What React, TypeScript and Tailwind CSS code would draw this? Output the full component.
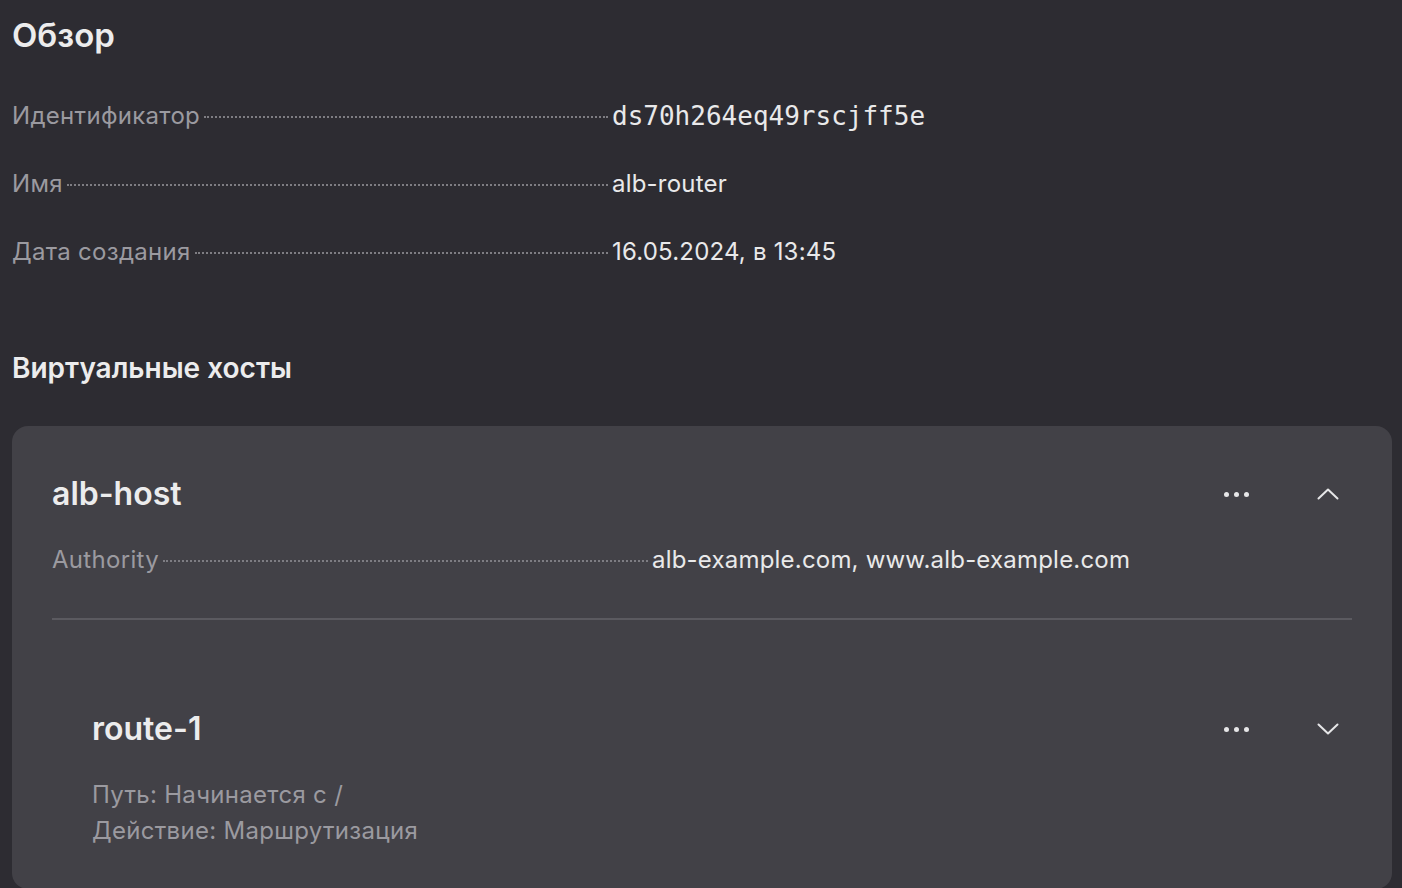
import React from 'react';

const font = { fontFamily: 'Inter, "Noto Sans", sans-serif' };

const labelClass = "text-[24px] leading-8 tracking-[0.3px] text-[#9b9aa0] whitespace-nowrap";
const valueClass = "text-[24px] leading-8 tracking-[0.2px] text-[#e9e9ea] whitespace-nowrap";

const Leader: React.FC<{ label: string }> = ({ label }) => (
  <div className="flex items-baseline w-[596px] shrink-0">
    <span className={labelClass}>{label}</span>
    <span className="flex-1 ml-1 border-b-2 border-dotted border-[#7e7d83] translate-y-[-6px]" />
  </div>
);

const Dots = () => (
  <button className="w-12 h-10 flex items-center justify-center gap-[5px]">
    <span className="w-[5px] h-[5px] rounded-full bg-[#e6e6e8]" />
    <span className="w-[5px] h-[5px] rounded-full bg-[#e6e6e8]" />
    <span className="w-[5px] h-[5px] rounded-full bg-[#e6e6e8]" />
  </button>
);

const Chevron: React.FC<{ up?: boolean }> = ({ up }) => (
  <button className="w-12 h-10 flex items-center justify-center">
    <svg width="24" height="24" viewBox="0 0 24 24" fill="none" stroke="#e6e6e8" strokeWidth="2" strokeLinecap="round" strokeLinejoin="round">
      {up ? <path d="M2.5 16.5 12 7.5l9.5 9" /> : <path d="M2.5 7.5 12 16.5l9.5-9" />}
    </svg>
  </button>
);

const rows = [
  { label: 'Идентификатор', value: 'ds70h264eq49rscjff5e', mono: true },
  { label: 'Имя', value: 'alb-router' },
  { label: 'Дата создания', value: '16.05.2024, в 13:45' },
];

export default function App() {
  return (
    <div className="min-h-screen bg-[#2d2c32] px-3 pt-[15px] pb-10" style={font}>
      <h1 className="text-[33px] leading-10 font-semibold text-[#ececed]">Обзор</h1>

      <div className="mt-[27px]">
        {rows.map((r) => (
          <div key={r.label} className="h-[68px] flex items-center">
            <Leader label={r.label} />
            <span
              className={r.mono ? "ml-1 text-[26px] leading-8 text-[#e9e9ea] whitespace-nowrap" : `ml-1 ${valueClass}`}
              style={r.mono ? { fontFamily: '"DejaVu Sans Mono", "Liberation Mono", monospace' } : undefined}
            >
              {r.value}
            </span>
          </div>
        ))}
      </div>

      <h2 className="mt-16 text-[28px] leading-9 font-semibold text-[#ececed]">Виртуальные хосты</h2>

      <div className="mt-10 w-[1380px] rounded-2xl bg-[#424147] px-10 pt-12 pb-10">
        <div className="flex items-center h-10">
          <span className="flex-1 text-[32px] leading-10 font-semibold text-[#ececed]">alb-host</span>
          <div className="flex items-center gap-11">
            <Dots />
            <Chevron up />
          </div>
        </div>
        <div className="mt-[30px] flex items-center">
          <Leader label="Authority" />
          <span className={`ml-1 ${valueClass}`}>alb-example.com, www.alb-example.com</span>
        </div>
        <div className="mt-[42px] h-[2px] bg-[#5b5a60]" />

        <div className="mt-[89px] pl-10">
          <div className="flex items-center h-10">
            <span className="flex-1 text-[32px] leading-10 font-semibold text-[#ececed]">route-1</span>
            <div className="flex items-center gap-11">
              <Dots />
              <Chevron />
            </div>
          </div>
          <div className="mt-7">
            <p className="text-[24px] leading-9 tracking-[0.3px] text-[#9b9aa0]">Путь: Начинается с /</p>
            <p className="text-[24px] leading-9 tracking-[0.3px] text-[#9b9aa0]">Действие: Маршрутизация</p>
          </div>
        </div>
      </div>
    </div>
  );
}
